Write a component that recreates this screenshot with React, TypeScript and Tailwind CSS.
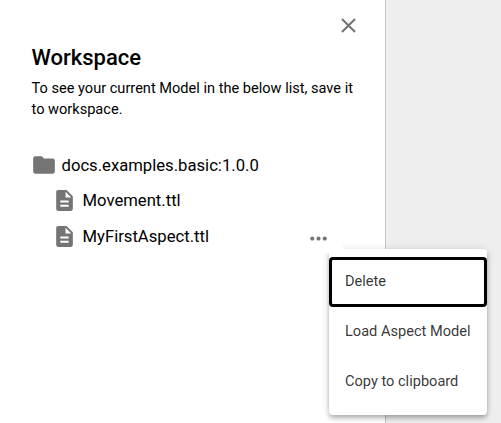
import React from 'react';

function FileIcon() {
  return (
    <svg width="25" height="25" viewBox="0 0 24 24" fill="#757575" className="-mt-px shrink-0">
      <path d="M14 2H6c-1.1 0-1.99.9-1.99 2L4 20c0 1.100.89 2 1.990 2H18c1.100 0 2-.9 2-2V8l-6-6zm2 16H8v-2h8v2zm0-4H8v-2h8v2zm-3-5V3.500L18.500 9H13z" />
    </svg>
  );
}

function FileRow({ name, children }: { name: string; children?: React.ReactNode }) {
  return (
    <div className="flex h-9 items-center pl-[21px]">
      <FileIcon />
      <span className="ml-[5.5px] text-[16.670px] leading-6">{name}</span>
      {children}
    </div>
  );
}

export default function App() {
  return (
    <div className="relative flex h-[423px] w-[501px] overflow-hidden bg-[#eeeeee] font-[Roboto,sans-serif] text-black">
      <aside className="w-[386px] border-r border-[#c8c8c8] bg-white pl-[31px]">
        <div className="flex h-[44px] justify-end pt-[13px] pr-[24px]">
          <svg width="25" height="25" viewBox="0 0 24 24" fill="#757575">
            <path d="M19 6.410L17.590 5 12 10.590 6.410 5 5 6.410 10.590 12 5 17.590 6.410 19 12 13.410 17.590 19 19 17.590 13.410 12z" />
          </svg>
        </div>
        <h1 className="pl-[0.5px] text-[22px] leading-7 font-medium">Workspace</h1>
        <p className="mt-[6px] w-[340px] pl-[0.5px] text-[14.580px] leading-[21px]">
          To see your current Model in the below list, save it<br />to workspace.
        </p>
        <div className="mt-[27px]">
          <div className="flex h-9 items-center">
            <svg width="26" height="26" viewBox="0 0 24 24" fill="#757575" className="-mt-px">
              <path d="M10 4H4c-1.100 0-1.990.9-1.990 2L2 18c0 1.100.9 2 2 2h16c1.100 0 2-.9 2-2V8c0-1.100-.9-2-2-2h-8l-2-2z" />
            </svg>
            <span className="mt-[2px] ml-[4.5px] text-[16.670px] leading-6">docs.examples.basic:1.0.0</span>
          </div>
          <FileRow name="Movement.ttl" />
          <FileRow name="MyFirstAspect.ttl">
            <button className="relative z-10 mr-[42px] ml-auto flex h-[32px] w-[39px] items-center bg-white pl-[2px]">
              <svg className="mt-[3px]" width="25" height="25" viewBox="0 0 24 24" fill="#757575">
                <path d="M6 10c-1.100 0-2 .9-2 2s.9 2 2 2 2-.9 2-2-.9-2-2-2zm12 0c-1.100 0-2 .9-2 2s.9 2 2 2 2-.9 2-2-.9-2-2-2zm-6 0c-1.100 0-2 .9-2 2s.9 2 2 2 2-.9 2-2-.9-2-2-2z" />
              </svg>
            </button>
          </FileRow>
        </div>
      </aside>
      <div className="absolute top-[249px] left-[329px] w-[158px] rounded-[4px] bg-white pt-2 pb-2 text-[14.580px] text-black/80 shadow-[0_2px_4px_-1px_rgba(0,0,0,.2),0_4px_5px_rgba(0,0,0,.14),0_1px_10px_rgba(0,0,0,.12)]">
        <div className="flex h-[50px] items-center rounded-[4px] border-[3px] border-black pl-[13px]">Delete</div>
        <div className="flex h-[50px] items-center pl-4">Load Aspect Model</div>
        <div className="flex h-[50px] items-center pl-4">Copy to clipboard</div>
      </div>
    </div>
  );
}
